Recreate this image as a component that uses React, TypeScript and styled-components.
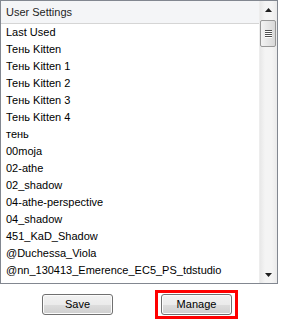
import React from "react";
import styled, { createGlobalStyle } from "styled-components";

const Global = createGlobalStyle`
  html, body { margin: 0; padding: 0; background: #ffffff; }
  body { font-family: "Liberation Sans", "DejaVu Sans", sans-serif; font-size: 11px; color: #000; }
`;

const Page = styled.div`
  width: 282px;
  height: 325px;
  display: flex;
  flex-direction: column;
  background: #ffffff;
`;

const ListBox = styled.div`
  width: 278px;
  height: 284px;
  box-sizing: border-box;
  border: 1px solid #828790;
  display: flex;
  overflow: hidden;
`;

const ListContent = styled.div`
  flex: 1;
  display: flex;
  flex-direction: column;
  min-width: 0;
`;

const Header = styled.div`
  height: 23px;
  box-sizing: border-box;
  background: #f4f5f7;
  border-bottom: 1px solid #d5d5d5;
  padding-left: 5px;
  display: flex;
  align-items: center;
  font-family: "Liberation Sans", sans-serif;
  font-size: 11px;
  color: #1e1e1e;
`;

const Row = styled.div`
  height: 17px;
  line-height: 17px;
  padding-left: 5px;
  white-space: nowrap;
  font-family: "Liberation Sans", sans-serif;
  font-size: 11px;
  color: #000;
`;

const ScrollBar = styled.div`
  width: 17px;
  display: flex;
  flex-direction: column;
  background: linear-gradient(to right, #e8e8e8, #f4f4f4 30%, #f4f4f4 70%, #eaeaea);
  border-left: 1px solid #ededed;
`;

const Arrow = styled.div`
  height: 17px;
  display: flex;
  align-items: center;
  justify-content: center;
`;

const Thumb = styled.div`
  margin: 2px 1px 0 0;
  height: 27px;
  box-sizing: border-box;
  border: 1px solid #979797;
  border-radius: 2px;
  background: linear-gradient(to right, #f3f3f3, #e6e6e6 50%, #d8d8d8);
  display: flex;
  flex-direction: column;
  align-items: center;
  justify-content: center;
  gap: 1px;
`;

const Grip = styled.div`
  width: 7px;
  height: 1px;
  background: #505050;
  box-shadow: 0 1px 0 #ffffff;
`;

const Track = styled.div`
  flex: 1;
`;

const ButtonRow = styled.div`
  display: flex;
  align-items: center;
  height: 32px;
  margin-top: 4px;
  padding-left: 42px;
`;

const Button = styled.button`
  width: 71px;
  height: 21px;
  box-sizing: border-box;
  border: 1px solid #707070;
  border-radius: 3px;
  background: linear-gradient(to bottom, #f2f2f2 0%, #ebebeb 50%, #dddddd 51%, #cfcfcf 100%);
  font-family: "Liberation Sans", sans-serif;
  font-size: 11px;
  color: #000;
  padding: 0;
  box-shadow: inset 0 0 0 1px #fcfcfc;
`;

const Highlight = styled.div`
  margin-left: 42px;
  border: 3px solid #ff0000;
  padding: 1px 3px;
  display: flex;
`;

const items = [
  "Last Used",
  "Тень Kitten",
  "Тень Kitten 1",
  "Тень Kitten 2",
  "Тень Kitten 3",
  "Тень Kitten 4",
  "тень",
  "00moja",
  "02-athe",
  "02_shadow",
  "04-athe-perspective",
  "04_shadow",
  "451_KaD_Shadow",
  "@Duchessa_Viola",
  "@nn_130413_Emerence_EC5_PS_tdstudio",
];

export default function App() {
  return (
    <>
      <Global />
      <Page>
        <ListBox>
          <ListContent>
            <Header>User Settings</Header>
            {items.map((t) => (
              <Row key={t}>{t}</Row>
            ))}
          </ListContent>
          <ScrollBar>
            <Arrow>
              <svg width="7" height="4" viewBox="0 0 7 4">
                <path d="M3.5 0 L7 4 L0 4 Z" fill="#1e1e1e" />
              </svg>
            </Arrow>
            <Thumb>
              <Grip />
              <Grip />
              <Grip />
              <Grip />
            </Thumb>
            <Track />
            <Arrow>
              <svg width="7" height="4" viewBox="0 0 7 4">
                <path d="M0 0 L7 0 L3.5 4 Z" fill="#1e1e1e" />
              </svg>
            </Arrow>
          </ScrollBar>
        </ListBox>
        <ButtonRow>
          <Button>Save</Button>
          <Highlight>
            <Button>Manage</Button>
          </Highlight>
        </ButtonRow>
      </Page>
    </>
  );
}
